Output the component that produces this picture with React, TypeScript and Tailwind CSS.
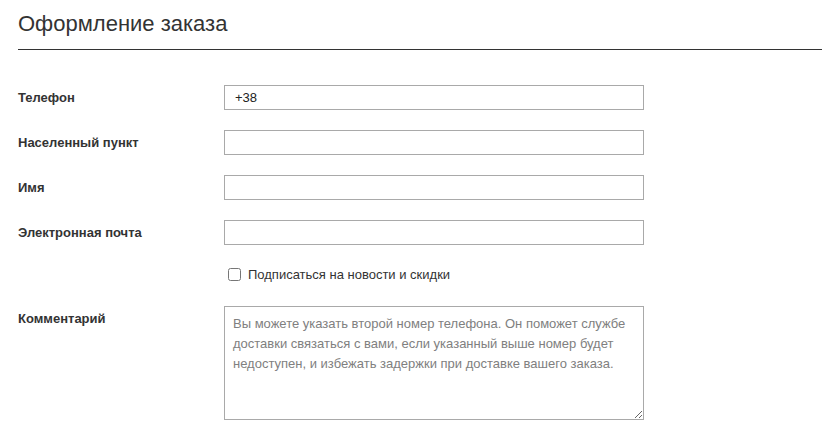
import { useState } from "react";

const fields = [
  { name: "phone", label: "Телефон" },
  { name: "city", label: "Населенный пункт" },
  { name: "name", label: "Имя" },
  { name: "email", label: "Электронная почта" },
];

export default function App() {
  const [formData, setFormData] = useState<Record<string, string>>({
    phone: "+38",
    city: "",
    name: "",
    email: "",
    comment: "",
  });
  const [subscribe, setSubscribe] = useState(false);

  const handleChange = (
    e: React.ChangeEvent<HTMLInputElement | HTMLTextAreaElement>
  ) => {
    setFormData({ ...formData, [e.target.name]: e.target.value });
  };

  return (
    <div className="min-h-screen bg-white font-['Liberation_Sans',Arial,sans-serif] text-[#333]">
      <div className="ml-[18px] w-[804px]">
        <div className="border-b border-[#333] pt-[10px] pb-[11px]">
          <h1 className="text-[22px] leading-[28px] font-normal text-[#333]">
            Оформление заказа
          </h1>
        </div>

        <form className="mt-[35px] flex flex-col">
          {fields.map((f) => (
            <div key={f.name} className="flex items-center mb-[20px]">
              <label className="w-[206px] text-[13px] font-bold leading-[25px]">
                {f.label}
              </label>
              <input
                type="text"
                name={f.name}
                value={formData[f.name]}
                onChange={handleChange}
                className="w-[420px] h-[25px] border border-[#a9a9a9] px-[10px] text-[13px] text-[#222] outline-none"
              />
            </div>
          ))}

          <div className="flex items-center ml-[210px] h-[19px]">
            <input
              type="checkbox"
              checked={subscribe}
              onChange={(e) => setSubscribe(e.target.checked)}
              className="w-[13px] h-[13px] m-0 mr-[7px]"
            />
            <span className="text-[13px] text-[#333]">
              Подписаться на новости и скидки
            </span>
          </div>

          <div className="flex items-start mt-[22px]">
            <label className="w-[206px] text-[13px] font-bold leading-[20px] pt-[3px]">
              Комментарий
            </label>
            <textarea
              name="comment"
              value={formData.comment}
              onChange={handleChange}
              placeholder="Вы можете указать второй номер телефона. Он поможет службе доставки связаться с вами, если указанный выше номер будет недоступен, и избежать задержки при доставке вашего заказа."
              className="w-[420px] h-[114px] border border-[#a9a9a9] px-[8px] py-[7px] text-[13px] leading-[20px] text-[#333] placeholder:text-[#808080] outline-none"
            />
          </div>
        </form>
      </div>
    </div>
  );
}
